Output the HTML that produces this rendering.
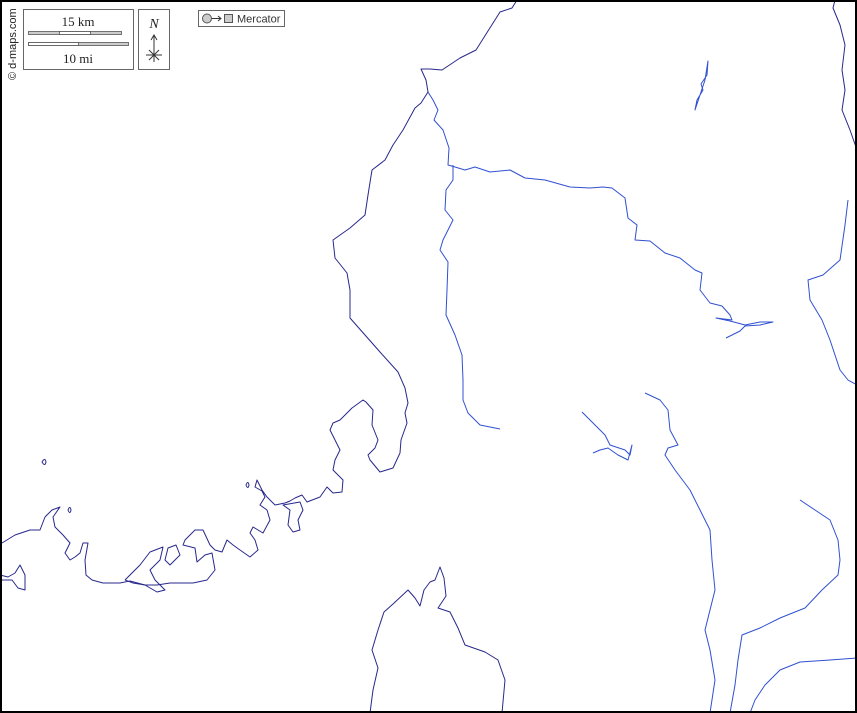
<!DOCTYPE html>
<html><head><meta charset="utf-8"><style>
html,body{margin:0;padding:0;background:#fff}
body{width:857px;height:713px;overflow:hidden;position:relative;font-family:"Liberation Sans",sans-serif}
.frame{position:absolute;left:0;top:0;width:853px;height:709px;border:2px solid #000}
</style></head><body>
<svg width="857" height="713" style="position:absolute;left:0;top:0">
<g fill="none" stroke="#28288c" stroke-width="1" stroke-linejoin="round">
<path d="M517,0 L512,8 L500,12 L476,50 L460,58 L442,70 L430,69 L421,69 L426,80 L428,92 L421,103 L415,108 L403,130 L393,145 L385,160 L372,170 L368,195 L365,215 L350,228 L333,240 L335,258 L347,273 L350,290 L350,318 L365,335 L380,352 L398,372 L405,388 L408,403 L405,413 L407,423 L401,440 L400,453 L393,468 L380,472 L370,460 L368,455 L375,448 L378,440 L372,425 L373,410 L366,402 L363,400 L352,408 L345,415 L340,420 L333,423 L330,430 L335,440 L340,450 L335,460 L333,470 L343,480 L342,492 L333,493 L327,487 L320,497 L307,502 L302,495 L295,498 L290,501 L285,503 L275,505 L267,497 L262,490 L257,480 L255,487 L262,491 L265,497 L260,505 L267,510 L270,520 L263,533 L253,527 L250,533 L255,540 L258,550 L250,557 L240,550 L233,545 L227,540 L222,552 L215,550 L210,545 L203,530 L195,530 L185,540 L183,545 L195,548 L197,562 L205,555 L212,553 L215,570 L207,580 L193,583 L170,583 L157,585 L145,585 L130,581 L120,583 L103,583 L92,580 L86,575 L85,560 L88,543 L83,543 L80,553 L75,557 L70,560 L65,553 L70,543 L63,535 L55,527 L53,517 L60,507 L52,510 L45,517 L40,530 L30,530 L15,535 L2,543"/>
<path d="M125,580 L133,583 L145,585 L157,592 L165,590 L155,580 L150,570 L160,560 L163,547 L150,552 L140,565 L125,580"/>
<path d="M168,548 L165,560 L170,565 L180,555 L176,545 Z"/>
<path d="M283,505 L290,510 L288,525 L293,532 L300,530 L298,520 L303,510 L300,502 Z"/>
<path d="M42,462 Q45,457 46,462 Q45,467 42,462 Z"/>
<path d="M68,510 Q70,505 71,510 Q70,515 68,510 Z"/>
<path d="M246,485 Q248,480 249,485 Q248,490 246,485 Z"/>
<path d="M0,575 L8,577 L15,573 L20,565 L25,575 L25,590 L18,588 L12,580 L2,580"/>
<path d="M370,713 L373,690 L378,668 L372,650 L378,630 L384,612 L393,604 L408,590 L415,598 L420,606 L424,590 L430,582 L435,580 L440,567 L444,578 L446,596 L438,608 L450,612 L458,628 L465,645 L485,652 L498,660 L505,680 L502,713"/>
<path d="M835,0 L833,8 L840,25 L845,45 L842,70 L845,90 L842,110 L850,130 L857,150"/>
</g>
<g fill="none" stroke="#3050d0" stroke-width="1" stroke-linejoin="round">
<path d="M428,92 L433,100 L438,110 L434,120 L443,130 L449,148 L448,165 L455,167 L465,170 L475,167 L490,172 L510,170 L525,178 L545,180 L570,187 L590,188 L603,187 L612,188 L625,198 L628,218 L637,225 L635,240 L650,241 L665,253 L680,258 L695,270 L702,273 L700,290 L710,303 L722,306 L730,315 L732,320 L716,318 L730,321 L745,325 L760,322 L773,322 L760,325 L745,326 L740,331 L726,338"/>
<path d="M453,165 L453,180 L446,190 L445,210 L453,220 L443,240 L440,250 L448,262 L447,290 L446,315 L455,335 L462,355 L463,380 L463,400 L468,413 L480,425 L500,429"/>
<path d="M708,61 L707,75 L701,84 L703,90 L697,100 L695,110 L700,95 L705,80 Z"/>
<path d="M582,412 L595,425 L605,435 L610,445 L625,450 L630,455 L632,445 L628,460 L618,455 L608,448 L600,450 L593,453"/>
<path d="M645,393 L660,400 L668,410 L670,430 L678,445 L668,448 L665,455 L675,470 L690,490 L700,510 L710,530 L712,560 L715,590 L705,630 L710,650 L715,680 L710,713"/>
<path d="M848,200 L845,225 L840,260 L823,275 L808,280 L810,300 L822,320 L830,340 L840,370 L848,380 L857,385"/>
<path d="M800,500 L815,510 L830,520 L838,540 L840,560 L838,575 L822,590 L805,608 L780,618 L760,628 L742,635 L738,660 L735,685 L730,713"/>
<path d="M857,658 L830,660 L800,662 L780,670 L765,685 L755,700 L750,713"/>
</g>
<g stroke="#666" stroke-width="1" fill="none">
<rect x="23.5" y="9.5" width="110" height="60"/>
<rect x="138.5" y="9.5" width="31" height="60"/>
<rect x="198.5" y="10.5" width="86" height="16"/>
</g>
<rect x="28.5" y="31.5" width="93" height="3" fill="#ccc" stroke="#555" stroke-width="0.8"/>
<rect x="59.5" y="31.5" width="31" height="3" fill="#fff" stroke="#555" stroke-width="0.8"/>
<rect x="28.5" y="42.5" width="100" height="3" fill="#ccc" stroke="#555" stroke-width="0.8"/>
<rect x="28.5" y="42.5" width="50" height="3" fill="#fff" stroke="#555" stroke-width="0.8"/>
<text x="78" y="26" font-family="Liberation Serif" font-size="13" text-anchor="middle" fill="#222">15 km</text>
<text x="78" y="63" font-family="Liberation Serif" font-size="13" text-anchor="middle" fill="#222">10 mi</text>
<text x="154" y="28" font-family="Liberation Serif" font-size="14" font-style="italic" text-anchor="middle" fill="#222">N</text>
<g stroke="#333" stroke-width="1" fill="none">
<path d="M154,62 L154,36 M151,40 L154,35 L157,40 M146,55 L162,55 M149,50 L159,60 M159,50 L149,60"/>
</g>
<circle cx="207" cy="18.5" r="4.5" fill="#ccc" stroke="#555"/>
<path d="M212,18.5 L221,18.5 M218,16 L221,18.5 L218,21" stroke="#333" fill="none"/>
<rect x="224.5" y="14.5" width="8" height="8" fill="#ccc" stroke="#555"/>
<text x="237" y="22.5" font-size="11" fill="#333">Mercator</text>
<text transform="translate(16,80) rotate(-90)" font-size="11" fill="#222">© d-maps.com</text>
</svg>
<div class="frame"></div>
</body></html>
